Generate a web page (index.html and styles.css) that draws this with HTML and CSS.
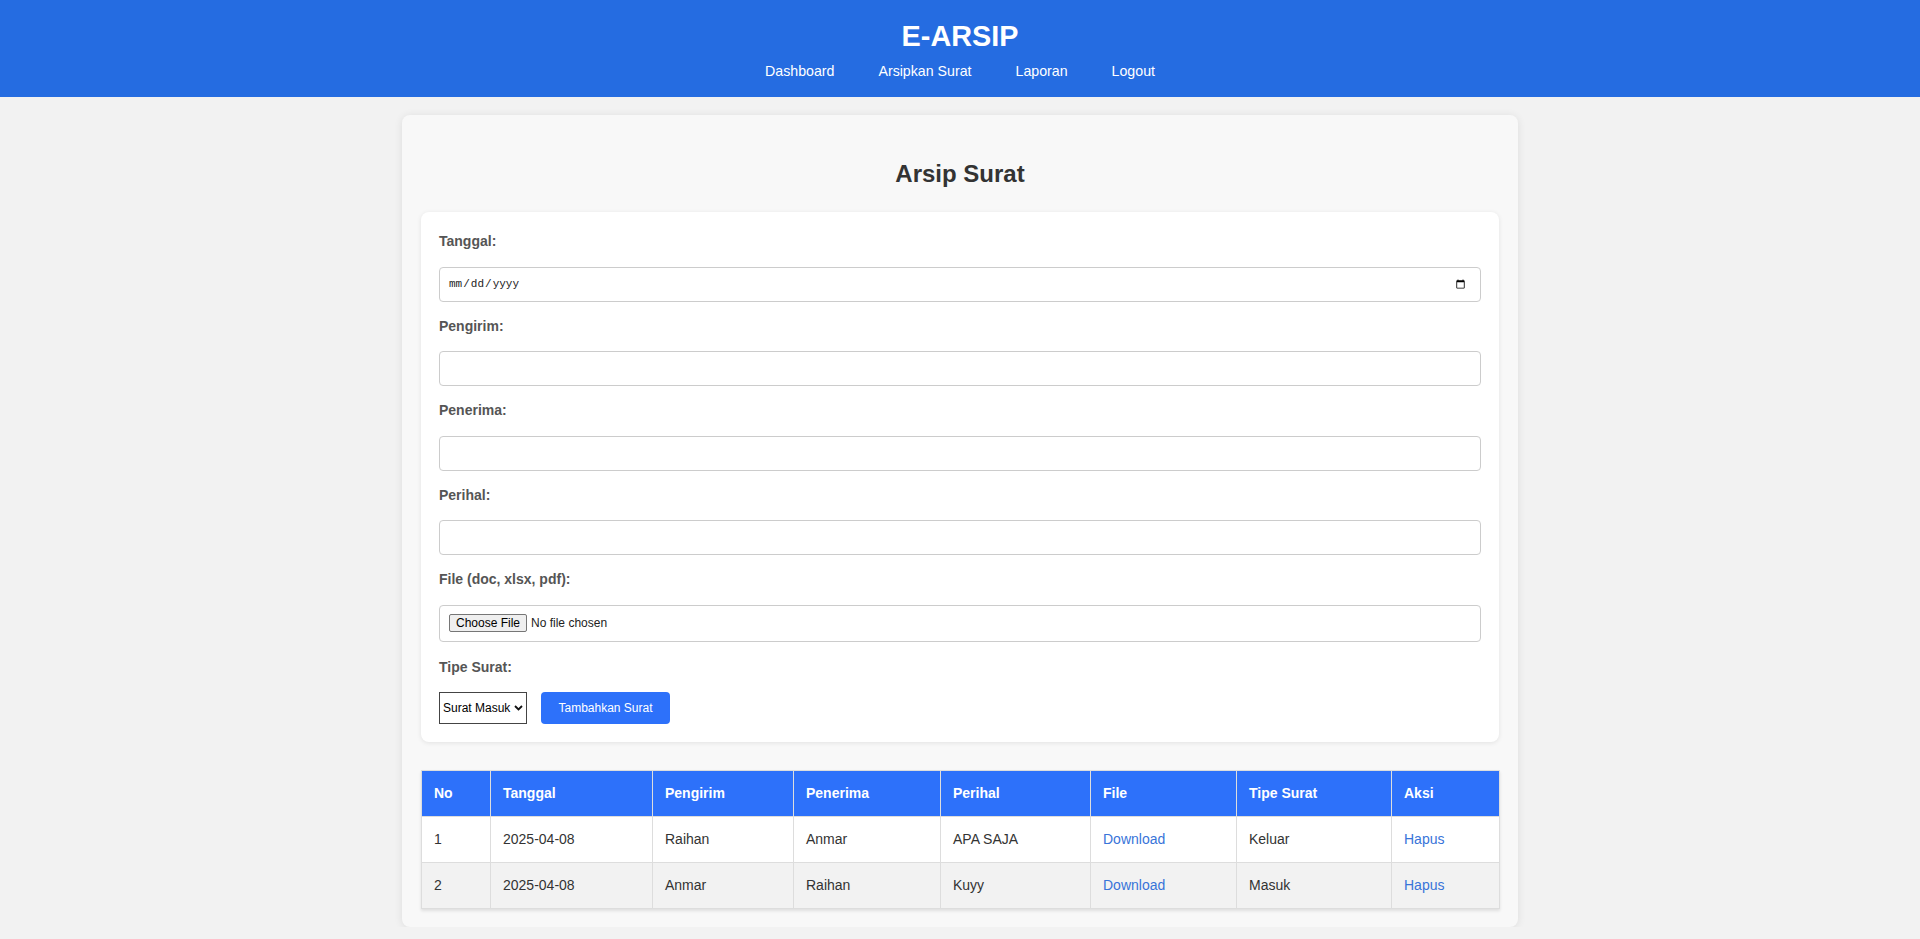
FILE: index.html
```html
<!DOCTYPE html>
<html lang="id">
<head>
<meta charset="utf-8">
<title>E-ARSIP</title>
<link rel="stylesheet" href="styles.css">
</head>
<body>
<header class="topbar">
  <h1 class="brand">E-ARSIP</h1>
  <nav class="nav">
    <a href="#">Dashboard</a>
    <a href="#">Arsipkan Surat</a>
    <a href="#">Laporan</a>
    <a href="#">Logout</a>
  </nav>
</header>

<main class="container">
  <h2 class="page-title">Arsip Surat</h2>

  <form class="card">
    <label class="label" for="tanggal">Tanggal:</label>
    <input class="field field-date" type="date" id="tanggal">

    <label class="label" for="pengirim">Pengirim:</label>
    <input class="field" type="text" id="pengirim">

    <label class="label" for="penerima">Penerima:</label>
    <input class="field" type="text" id="penerima">

    <label class="label" for="perihal">Perihal:</label>
    <input class="field" type="text" id="perihal">

    <label class="label" for="file">File (doc, xlsx, pdf):</label>
    <input class="field field-file" type="file" id="file">

    <label class="label" for="tipe">Tipe Surat:</label>
    <div class="actions">
      <span class="select-wrap">
        <select class="select" id="tipe">
          <option>Surat Masuk</option>
          <option>Surat Keluar</option>
        </select>
        <svg class="chevron" width="9" height="6" viewBox="0 0 9 6"><path d="M1 1 L4.5 4.5 L8 1" fill="none" stroke="#111" stroke-width="1.8"/></svg>
      </span>
      <button class="btn" type="button">Tambahkan Surat</button>
    </div>
  </form>

  <table class="table">
    <colgroup>
      <col class="c-no"><col class="c-tgl"><col class="c-pengirim"><col class="c-penerima">
      <col class="c-perihal"><col class="c-file"><col class="c-tipe"><col class="c-aksi">
    </colgroup>
    <thead>
      <tr>
        <th>No</th><th>Tanggal</th><th>Pengirim</th><th>Penerima</th>
        <th>Perihal</th><th>File</th><th>Tipe Surat</th><th>Aksi</th>
      </tr>
    </thead>
    <tbody>
      <tr>
        <td>1</td><td>2025-04-08</td><td>Raihan</td><td>Anmar</td><td>APA SAJA</td>
        <td><a class="link" href="#">Download</a></td><td>Keluar</td><td><a class="link" href="#">Hapus</a></td>
      </tr>
      <tr>
        <td>2</td><td>2025-04-08</td><td>Anmar</td><td>Raihan</td><td>Kuyy</td>
        <td><a class="link" href="#">Download</a></td><td>Masuk</td><td><a class="link" href="#">Hapus</a></td>
      </tr>
    </tbody>
  </table>
</main>
</body>
</html>
```

FILE: styles.css
```css
* { box-sizing: border-box; }

body {
  margin: 0;
  background: #f2f2f2;
  font-family: "Liberation Sans", Arial, sans-serif;
  color: #333;
}

.topbar {
  background: #256ce1;
  color: #fff;
  text-align: center;
  padding: 20px 0 18px;
}

.brand {
  margin: 0 0 10px;
  font-size: 28.8px;
  line-height: 33px;
  font-weight: bold;
}

.nav {
  display: flex;
  justify-content: center;
  gap: 44px;
  font-size: 14.2px;
  line-height: 16px;
}

.nav a {
  color: #fff;
  text-decoration: none;
}

.container {
  width: 1116px;
  margin: 18px auto 0;
  background: #f8f8f8;
  border-radius: 8px;
  padding: 19px 19px 18px;
  box-shadow: 0 1px 8px rgba(0, 0, 0, 0.09);
}

.page-title {
  text-align: center;
  font-size: 24px;
  line-height: 27.6px;
  margin: 26px 0 24px;
  color: #333;
}

.card {
  background: #fff;
  border-radius: 8px;
  padding: 21.5px 18px 18px;
  box-shadow: 0 1px 5px rgba(0, 0, 0, 0.09);
}

.label {
  display: block;
  font-size: 14px;
  line-height: 16px;
  font-weight: bold;
  color: #555;
  margin-bottom: 17.5px;
}

.field {
  display: block;
  width: 100%;
  height: 35px;
  padding: 0 8px;
  margin: 0 0 16px;
  border: 1px solid #ccc;
  border-radius: 4px;
  background: #fff;
  font-family: "Liberation Sans", Arial, sans-serif;
  font-size: 14px;
  color: #333;
}

.field-date {
  font-family: "Liberation Mono", monospace;
  font-size: 11px;
  color: #222;
  padding-right: 12px;
}

.field-file {
  height: 37px;
  padding: 8px 9px;
  margin-bottom: 17px;
  font-size: 12px;
  line-height: 14px;
  color: #222;
}

.field-file::file-selector-button {
  font-family: "Liberation Sans", Arial, sans-serif;
  font-size: 12px;
  padding: 1px 6px;
  margin-right: 4px;
  border: 1px solid #767676;
  border-radius: 2px;
  background: #efefef;
  color: #000;
}

.actions {
  display: flex;
  align-items: flex-start;
  gap: 14px;
}

.select-wrap {
  position: relative;
  display: inline-block;
}

.select {
  -webkit-appearance: none;
  appearance: none;
  width: 88px;
  height: 32px;
  padding: 0 10px 0 3px;
  border: 1px solid #444;
  border-radius: 0;
  background: #fff;
  font-family: "Liberation Sans", Arial, sans-serif;
  font-size: 12px;
  color: #000;
}

.chevron {
  position: absolute;
  right: 4px;
  top: 13px;
  pointer-events: none;
}

.btn {
  width: 129px;
  height: 32px;
  border: none;
  border-radius: 4px;
  background: #2d71fa;
  color: #fff;
  font-family: "Liberation Sans", Arial, sans-serif;
  font-size: 12px;
  cursor: pointer;
}

.table {
  width: 100%;
  margin-top: 28px;
  border-collapse: collapse;
  table-layout: fixed;
  background: #fff;
  box-shadow: 0 2px 3px rgba(0, 0, 0, 0.1);
}

.c-no { width: 69px; }
.c-tgl { width: 162px; }
.c-pengirim { width: 141px; }
.c-penerima { width: 147px; }
.c-perihal { width: 150px; }
.c-file { width: 146px; }
.c-tipe { width: 155px; }
.c-aksi { width: 108px; }

.table th,
.table td {
  border: 1px solid #ddd;
  padding: 12px;
  text-align: left;
  font-size: 14px;
  line-height: 21px;
}

.table th {
  background: #2d71fa;
  color: #fff;
  font-weight: bold;
}

.table td {
  color: #333;
}

.table tbody tr:nth-child(even) {
  background: #f2f2f2;
}

.link {
  color: #3874d9;
  text-decoration: none;
}
```
